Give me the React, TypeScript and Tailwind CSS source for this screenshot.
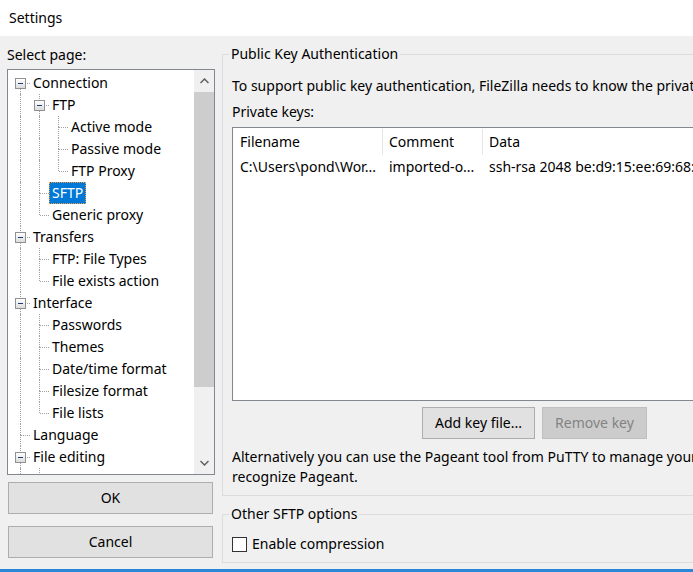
import React from "react";

type Row = {
  label: string;
  depth: number;
  anc: boolean[];
  next: boolean;
  box?: boolean;
  first?: boolean;
  selected?: boolean;
};

const rows: Row[] = [
  { label: "Connection", depth: 0, anc: [], next: true, box: true, first: true },
  { label: "FTP", depth: 1, anc: [true], next: true, box: true },
  { label: "Active mode", depth: 2, anc: [true, true], next: true },
  { label: "Passive mode", depth: 2, anc: [true, true], next: true },
  { label: "FTP Proxy", depth: 2, anc: [true, true], next: false },
  { label: "SFTP", depth: 1, anc: [true], next: true, selected: true },
  { label: "Generic proxy", depth: 1, anc: [true], next: false },
  { label: "Transfers", depth: 0, anc: [], next: true, box: true },
  { label: "FTP: File Types", depth: 1, anc: [true], next: true },
  { label: "File exists action", depth: 1, anc: [true], next: false },
  { label: "Interface", depth: 0, anc: [], next: true, box: true },
  { label: "Passwords", depth: 1, anc: [true], next: true },
  { label: "Themes", depth: 1, anc: [true], next: true },
  { label: "Date/time format", depth: 1, anc: [true], next: true },
  { label: "Filesize format", depth: 1, anc: [true], next: true },
  { label: "File lists", depth: 1, anc: [true], next: false },
  { label: "Language", depth: 0, anc: [], next: true },
  { label: "File editing", depth: 0, anc: [], next: true, box: true },
  { label: "", depth: 1, anc: [true], next: true },
];

const line = "absolute border-dotted border-[#a0a0a0]";

function AncCell({ on }: { on: boolean }) {
  return (
    <div className="relative w-[19px] h-full shrink-0">
      {on && <span className={`${line} left-[9px] top-0 bottom-0 border-l`} />}
    </div>
  );
}

function OwnCell({ row }: { row: Row }) {
  return (
    <div className="relative w-[19px] h-full shrink-0">
      {!row.first && <span className={`${line} left-[9px] top-0 h-[11px] border-l`} />}
      {row.next && <span className={`${line} left-[9px] top-[11px] bottom-0 border-l`} />}
      <span className={`${line} left-[10px] right-0 top-[11px] border-t`} />
      {row.box && (
        <span className="absolute left-[4px] top-[6px] w-[11px] h-[11px] border border-[#919191] bg-gradient-to-b from-white to-[#dcdcdc] flex items-center justify-center">
          <span className="block w-[5px] h-px bg-[#1c3c78]" />
        </span>
      )}
    </div>
  );
}

function TreeRow({ row }: { row: Row }) {
  return (
    <div className="flex items-center h-[22px]">
      {row.anc.map((on, i) => (
        <AncCell key={i} on={on} />
      ))}
      <OwnCell row={row} />
      {row.label && (
        <span
          className={`px-[2px] h-[22px] leading-[20px] whitespace-nowrap border ${
            row.selected
              ? "bg-[#0078d7] text-white border-dotted border-[#f0a040]"
              : "border-transparent"
          }`}
        >
          {row.label}
        </span>
      )}
    </div>
  );
}

function WinButton({ children, disabled, className = "" }: { children: React.ReactNode; disabled?: boolean; className?: string }) {
  return (
    <button
      className={`h-[32px] border flex items-center justify-center ${
        disabled
          ? "bg-[#cccccc] border-[#bfbfbf] text-[#838383]"
          : "bg-[#e1e1e1] border-[#adadad] text-black"
      } ${className}`}
    >
      {children}
    </button>
  );
}

export default function App() {
  return (
    <div
      className="w-[693px] h-[572px] bg-[#f0f0f0] flex flex-col overflow-hidden text-[14px] leading-[20px] text-black"
      style={{ fontFamily: '"Noto Sans", "Open Sans", sans-serif' }}
    >
      <div className="h-[36px] bg-white flex items-center pl-[9px] shrink-0">Settings</div>

      <div className="flex flex-1 min-h-0">
        {/* left: page tree */}
        <div className="w-[222px] shrink-0 pl-[7px] pt-[9px]">
          <div>Select page:</div>
          <div className="mt-[4px] w-[208px] h-[406px] border border-[#828790] bg-white flex">
            <div className="flex-1 overflow-hidden pt-[2px] pl-[3px]">
              {rows.map((r, i) => (
                <TreeRow key={i} row={r} />
              ))}
            </div>
            <div className="w-[20px] bg-[#f0f0f0] flex flex-col">
              <div className="h-[22px] flex items-center justify-center">
                <svg width="9" height="6" viewBox="0 0 9 6">
                  <path d="M0.5 5 L4.5 1 L8.5 5" fill="none" stroke="#606060" strokeWidth="1.5" />
                </svg>
              </div>
              <div className="h-[295px] bg-[#cdcdcd]" />
              <div className="flex-1" />
              <div className="h-[22px] flex items-center justify-center">
                <svg width="9" height="6" viewBox="0 0 9 6">
                  <path d="M0.5 1 L4.5 5 L8.5 1" fill="none" stroke="#606060" strokeWidth="1.5" />
                </svg>
              </div>
            </div>
          </div>
          <WinButton className="mt-[7px] ml-px w-[205px]">OK</WinButton>
          <WinButton className="mt-[12px] ml-px w-[205px]">Cancel</WinButton>
        </div>

        {/* right: SFTP page */}
        <div className="flex-1 overflow-hidden pt-[8px]">
          <fieldset className="w-[560px] border border-[#dcdcdc]">
            <legend className="ml-[6px] px-[2px]">Public Key Authentication</legend>
            <div className="pt-[12px] pl-[9px] pb-[8px]">
              <div className="whitespace-nowrap">
                To support public key authentication, FileZilla needs to know the private keys to use.
              </div>
              <div className="mt-[6px]">Private keys:</div>
              <div className="mt-[5px] w-[540px] h-[274px] border border-[#828790] bg-white">
                <div className="flex h-[28px] items-center">
                  <div className="w-[150px] h-[26px] pl-[7px] flex items-center border-r border-[#e5e5e5]">Filename</div>
                  <div className="w-[100px] h-[26px] pl-[6px] flex items-center border-r border-[#e5e5e5]">Comment</div>
                  <div className="flex-1 h-[26px] pl-[6px] flex items-center">Data</div>
                </div>
                <div className="flex h-[22px] items-center whitespace-nowrap">
                  <div className="w-[150px] pl-[7px] overflow-hidden">C:\Users\pond\Wor...</div>
                  <div className="w-[100px] pl-[6px] overflow-hidden">imported-o...</div>
                  <div className="flex-1 pl-[6px] overflow-hidden">ssh-rsa 2048 be:d9:15:ee:69:68:f3:0a:7c:21:bb</div>
                </div>
              </div>
              <div className="flex gap-[7px] mt-[6px] ml-[190px]">
                <WinButton className="w-[113px]">Add key file...</WinButton>
                <WinButton disabled className="w-[105px]">Remove key</WinButton>
              </div>
              <div className="mt-[8px] whitespace-nowrap">
                Alternatively you can use the Pageant tool from PuTTY to manage your keys, FileZilla does
              </div>
              <div className="whitespace-nowrap">recognize Pageant.</div>
            </div>
          </fieldset>

          <fieldset className="mt-[8px] w-[560px] border border-[#dcdcdc]">
            <legend className="ml-[6px] px-[2px]">Other SFTP options</legend>
            <div className="pt-[10px] pl-[9px] pb-[8px] flex items-center gap-[5px]">
              <span className="w-[15px] h-[15px] border border-[#333333] bg-white" />
              <span>Enable compression</span>
            </div>
          </fieldset>
        </div>
      </div>

      <div className="h-[3px] bg-[#2b88d8] shrink-0" />
    </div>
  );
}
